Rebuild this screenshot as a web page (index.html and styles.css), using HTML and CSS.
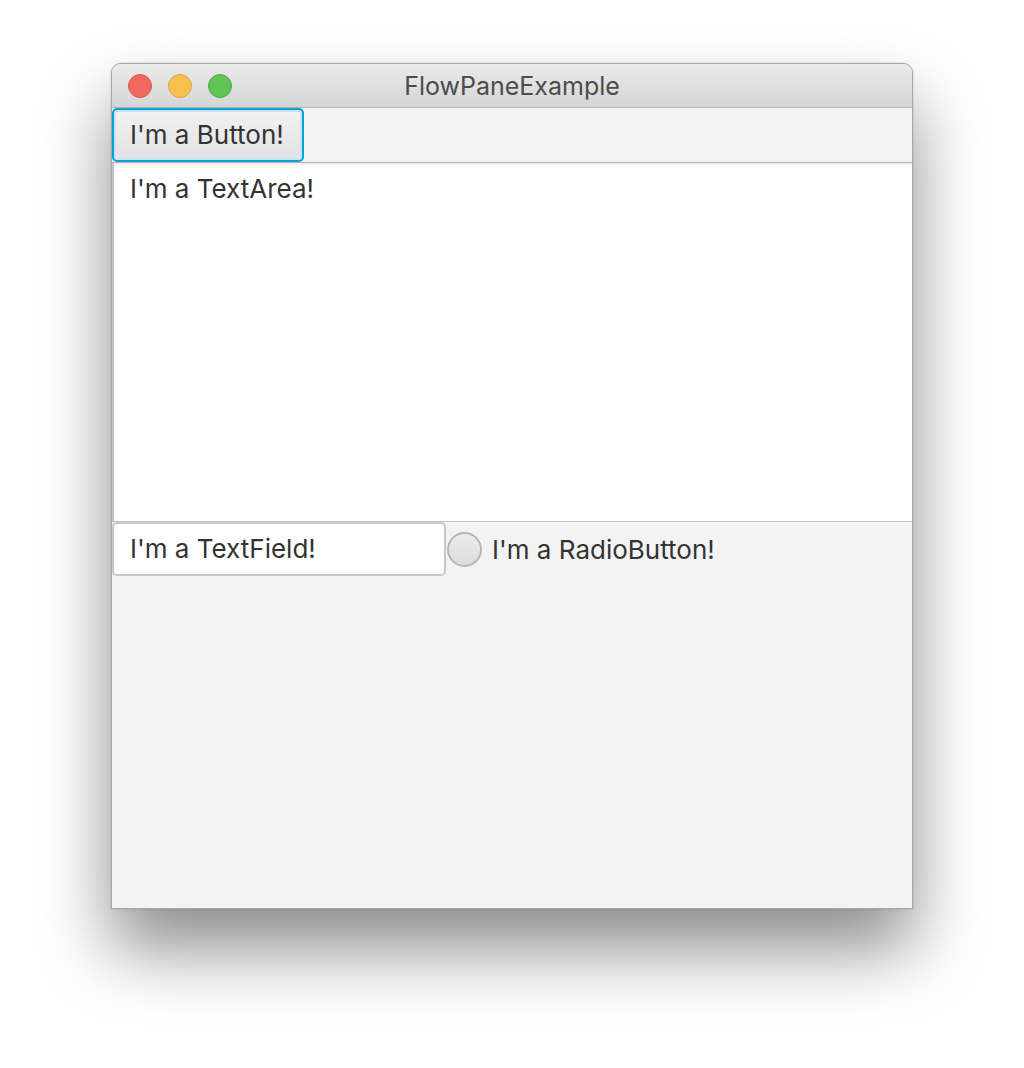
FILE: index.html
```html
<!DOCTYPE html>
<html>
<head>
<meta charset="utf-8">
<link rel="stylesheet" href="styles.css">
</head>
<body>
<div class="window">
  <div class="titlebar">
    <div class="lights">
      <span class="light red"></span>
      <span class="light yellow"></span>
      <span class="light green"></span>
    </div>
    <div class="title">FlowPaneExample</div>
  </div>
  <div class="content">
    <div class="flow">
      <div class="button">I'm a Button!</div>
      <div class="textarea">I'm a TextArea!</div>
      <div class="textfield">I'm a TextField!</div>
      <div class="radio"><span class="dot"></span><span class="rlabel">I'm a RadioButton!</span></div>
    </div>
  </div>
</div>
</body>
</html>
```

FILE: styles.css
```css
html, body {
  margin: 0;
  padding: 0;
  background: #ffffff;
}
body {
  font-family: Inter, "Liberation Sans", sans-serif;
  color: #333333;
  padding: 63px 0 0 111px;
  height: 1068px;
  box-sizing: border-box;
  overflow: hidden;
}
.window {
  width: 802px;
  height: 846px;
  box-sizing: border-box;
  border: 1px solid #a8a8a8;
  border-radius: 10px 10px 0 0;
  background: #f3f3f3;
  box-shadow: 0 40px 70px rgba(0,0,0,0.45), 0 0 2px rgba(0,0,0,0.2);
  overflow: hidden;
  display: flex;
  flex-direction: column;
}
.titlebar {
  height: 43px;
  flex: none;
  background: linear-gradient(#ebebeb, #d5d5d5);
  border-bottom: 1px solid #b4b4b4;
  position: relative;
  display: flex;
  align-items: center;
}
.lights {
  display: flex;
  gap: 16px;
  padding-left: 16px;
}
.light {
  width: 24px;
  height: 24px;
  border-radius: 50%;
  box-sizing: border-box;
}
.red { background: #ee6a5f; border: 1px solid #d8564b; }
.yellow { background: #f6c04f; border: 1px solid #dfa63e; }
.green { background: #61c454; border: 1px solid #4fac42; }
.title {
  position: absolute;
  left: 0;
  right: 0;
  top: 0;
  line-height: 45px;
  text-align: center;
  font-size: 25px;
  color: #4c4c4c;
}
.content {
  flex: 1;
  min-height: 0;
}
.flow {
  display: flex;
  flex-wrap: wrap;
  align-items: center;
  width: 1000px;
}
.button {
  height: 54px;
  width: 192px;
  box-sizing: border-box;
  border: 2px solid #0a9fd6;
  border-radius: 5px;
  box-shadow: inset 0 0 0 2px #c6e6f3;
  background: linear-gradient(#f2f2f2, #e2e2e2);
  font-size: 26px;
  padding-left: 16px;
  line-height: 50px;
}
.textarea {
  width: 1000px;
  height: 360px;
  box-sizing: border-box;
  background: #ffffff;
  border-top: 1px solid #b5b5b5;
  border-left: 2px solid #c4c4c4;
  border-bottom: 1px solid #c6c6c6;
  box-shadow: inset 0 3px 3px -2px rgba(0,0,0,0.12);
  font-size: 26px;
  padding: 10px 0 0 16px;
  line-height: 32px;
}
.textfield {
  width: 334px;
  height: 54px;
  box-sizing: border-box;
  background: #ffffff;
  border: 2px solid #c8c8c8;
  border-radius: 5px;
  font-size: 26px;
  padding-left: 16px;
  line-height: 50px;
}
.radio {
  display: flex;
  align-items: center;
  gap: 10px;
  padding-left: 1px;
}
.dot {
  width: 35px;
  height: 35px;
  box-sizing: border-box;
  border-radius: 50%;
  border: 2px solid #b6b6b6;
  background: linear-gradient(#ececec, #dcdcdc);
}
.rlabel {
  font-size: 26px;
}
```
